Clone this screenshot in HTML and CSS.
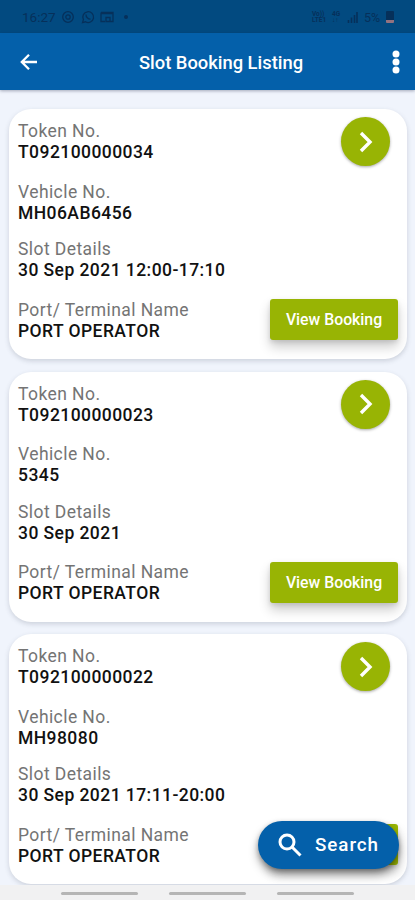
FILE: index.html
```html
<!DOCTYPE html>
<html lang="en">
<head>
<meta charset="utf-8">
<title>Slot Booking Listing</title>
<link rel="stylesheet" href="styles.css">
</head>
<body>
<div class="screen">
  <div class="status">
    <span class="time">16:27</span>
    <svg class="st-icon" viewBox="0 0 14 14"><circle cx="7" cy="7" r="5.3"/><circle cx="7" cy="7" r="2.2"/></svg>
    <svg class="st-icon" viewBox="0 0 14 14"><path d="M1.500 12.600l.9-3A5.400 5.400 0 1 1 4.500 11.800z"/><path d="M5 4.500c-.1 2.500 2 4.600 4.500 4.600"/></svg>
    <svg class="st-icon" viewBox="0 0 14 14"><path d="M1 3.500h12M1 2.500h12v9H10M1 2.500v9h4M6 7.500h4v4H6z"/></svg>
    <span class="st-dot"></span>
    <span class="st-space"></span>
    <span class="tiny"><span>Vo))</span><span>LTE1</span></span>
    <span class="tiny tiny-net"><span>4G</span><span>↓↑</span></span>
    <svg class="signal" viewBox="0 0 11 12"><path d="M1.500 12V9M4.500 12V6.500M7.500 12V4M10 12V1"/></svg>
    <span class="percent">5%</span>
    <span class="battery"></span>
  </div>
  <header class="appbar">
    <svg class="back" viewBox="0 0 18 18"><path d="M17 9H2M9 1.800L1.800 9 9 16.200"/></svg>
    <h1>Slot Booking Listing</h1>
    <svg class="more" viewBox="0 0 8 24"><circle cx="4" cy="4" r="3.500"/><circle cx="4" cy="12" r="3.500"/><circle cx="4" cy="20" r="3.500"/></svg>
  </header>
  <main class="list">
    <article class="card">
      <dl>
        <div><dt>Token No.</dt><dd>T092100000034</dd></div>
        <div><dt>Vehicle No.</dt><dd>MH06AB6456</dd></div>
        <div><dt>Slot Details</dt><dd>30 Sep 2021 12:00-17:10</dd></div>
        <div><dt>Port/ Terminal Name</dt><dd>PORT OPERATOR</dd></div>
      </dl>
      <div class="actions">
        <span class="go"><svg viewBox="0 0 14 22"><path d="M2 2l9 9-9 9"/></svg></span>
        <span class="view">View Booking</span>
      </div>
    </article>
    <article class="card">
      <dl>
        <div><dt>Token No.</dt><dd>T092100000023</dd></div>
        <div><dt>Vehicle No.</dt><dd>5345</dd></div>
        <div><dt>Slot Details</dt><dd>30 Sep 2021</dd></div>
        <div><dt>Port/ Terminal Name</dt><dd>PORT OPERATOR</dd></div>
      </dl>
      <div class="actions">
        <span class="go"><svg viewBox="0 0 14 22"><path d="M2 2l9 9-9 9"/></svg></span>
        <span class="view">View Booking</span>
      </div>
    </article>
    <article class="card">
      <dl>
        <div><dt>Token No.</dt><dd>T092100000022</dd></div>
        <div><dt>Vehicle No.</dt><dd>MH98080</dd></div>
        <div><dt>Slot Details</dt><dd>30 Sep 2021 17:11-20:00</dd></div>
        <div><dt>Port/ Terminal Name</dt><dd>PORT OPERATOR</dd></div>
      </dl>
      <div class="actions">
        <span class="go"><svg viewBox="0 0 14 22"><path d="M2 2l9 9-9 9"/></svg></span>
        <span class="view view-blank"></span>
      </div>
    </article>
  </main>
  <div class="search">
    <svg viewBox="0 0 24 24"><circle cx="9" cy="9" r="7"/><path d="M14 14l8.500 8.500"/></svg>
    <span>Search</span>
  </div>
  <nav class="navbar"><i></i><i></i><i></i></nav>
</div>
</body>
</html>
```
FILE: styles.css
```css
* { box-sizing: border-box; }
body { margin: 0; font-family: Roboto, "Liberation Sans", sans-serif; }
.screen {
  position: relative;
  width: 415px;
  height: 900px;
  overflow: hidden;
  display: flex;
  flex-direction: column;
  background: #f0f4fc;
}
.status {
  height: 33px;
  flex: none;
  display: flex;
  align-items: center;
  padding: 1px 21px 0 22px;
  background: #024a80;
  color: #06305a;
}
.time { width: 32px; margin-right: 7px; font-size: 13.500px; }
.st-icon {
  width: 14px;
  height: 14px;
  margin-right: 5.500px;
  fill: none;
  stroke: #06305a;
  stroke-width: 1.300;
}
.st-dot { width: 4px; height: 4px; margin-left: 4px; border-radius: 50%; background: #06305a; }
.st-space { flex: 1; }
.tiny { display: flex; flex-direction: column; width: 17px; font-size: 6.500px; line-height: 6.500px; font-weight: 700; }
.tiny-net { width: 13px; margin-left: 3px; }
.signal { width: 11px; height: 12px; margin-left: 2px; fill: none; stroke: #06305a; stroke-width: 1.600; }
.percent { width: 18px; margin: 0 4px 0 6px; font-size: 12.500px; }
.battery { width: 8px; height: 12px; border-radius: 1px; background: #06305a; border-bottom: 3px solid #94727f; }

.appbar {
  position: relative;
  height: 57px;
  flex: none;
  display: flex;
  align-items: center;
  justify-content: space-between;
  padding: 0 15px 0 20px;
  background: #0460aa;
  box-shadow: 0 1px 3px rgba(20, 30, 60, .35);
}
.appbar h1 { margin: 1px 0 0 12px; font-size: 18.350px; font-weight: 500; color: #fff; }
.back { width: 18px; height: 18px; fill: none; stroke: #fff; stroke-width: 2.300; }
.more { width: 8px; height: 24px; fill: #fff; }

.list { flex: none; display: flex; flex-direction: column; gap: 12.500px; padding: 19px 8px 0 9px; }
.card {
  display: flex;
  justify-content: space-between;
  height: 250px;
  padding: 8px 9px 19px 9px;
  border-radius: 22px;
  background: #fff;
  box-shadow: 0 2px 5px rgba(60, 70, 90, .2);
}
dl { margin: 4px 0 0; display: flex; flex-direction: column; gap: 18.500px; }
dl > div:nth-child(3) { margin-top: -3px; }
dt, dd { margin: 0; font-size: 17.500px; line-height: 21px; white-space: nowrap; }
dt { color: #747474; letter-spacing: .42px; }
dd { color: #111; font-weight: 500; letter-spacing: .44px; }
.actions { display: flex; flex-direction: column; align-items: flex-end; justify-content: space-between; }
.go {
  display: flex;
  align-items: center;
  justify-content: center;
  width: 49px;
  height: 49px;
  margin-right: 8px;
  border-radius: 50%;
  background: #98b404;
  box-shadow: 0 1px 3px rgba(0, 0, 0, .35);
}
.go svg { width: 14px; height: 22px; fill: none; stroke: #fff; stroke-width: 3.400; }
.view {
  display: flex;
  align-items: center;
  justify-content: center;
  width: 128px;
  height: 41px;
  border-radius: 3px;
  background: #98b404;
  color: #fff;
  font-size: 15.800px;
  font-weight: 500;
  box-shadow: 0 7px 12px rgba(0, 0, 0, .2), 0 2px 4px rgba(0, 0, 0, .1);
}
.search {
  position: absolute;
  left: 258px;
  top: 821px;
  z-index: 2;
  display: flex;
  align-items: center;
  width: 141px;
  height: 48px;
  padding-left: 20px;
  border-radius: 24px;
  background: #0460aa;
  color: #fff;
  font-size: 18.800px;
  font-weight: 500;
  letter-spacing: .95px;
  box-shadow: 0 6px 10px rgba(0, 0, 0, .35), 0 2px 5px rgba(0, 0, 0, .25);
}
.search svg { width: 24px; height: 24px; margin-right: 13px; fill: none; stroke: #fff; stroke-width: 3; }
.navbar {
  position: relative;
  flex: none;
  height: 15px;
  margin-top: auto;
  display: flex;
  justify-content: center;
  gap: 31px;
  padding: 7px 0 0;
  background: #f1f1f2;
}
.navbar i { width: 77px; height: 3px; border-radius: 2px; background: #b5b5b5; }
```
